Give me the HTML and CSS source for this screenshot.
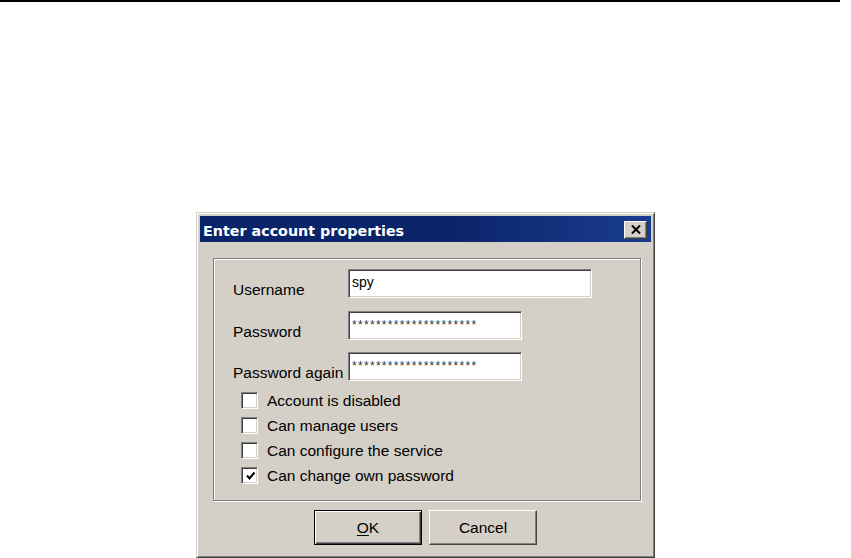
FILE: index.html
```html
<!DOCTYPE html>
<html>
<head>
<meta charset="utf-8">
<link rel="stylesheet" href="styles.css">
</head>
<body>
<div class="topline"></div>
<div class="dialog">
  <div class="titlebar">
    <span class="title">Enter account properties</span>
    <div class="close">
      <svg width="10" height="9" viewBox="0 0 10 9"><path d="M1 0.5 L9 8.5 M9 0.5 L1 8.5" stroke="#000" stroke-width="2"/></svg>
    </div>
  </div>
  <div class="group">
    <div class="field-row">
      <span class="label">Username</span>
      <div class="input wide user">spy</div>
    </div>
    <div class="field-row r2">
      <span class="label">Password</span>
      <div class="input narrow pw">*********************</div>
    </div>
    <div class="field-row r3">
      <span class="label">Password again</span>
      <div class="input narrow pw">*********************</div>
    </div>
    <div class="checks">
      <div class="check-row"><span class="cb"></span><span class="cl">Account is disabled</span></div>
      <div class="check-row"><span class="cb"></span><span class="cl">Can manage users</span></div>
      <div class="check-row"><span class="cb"></span><span class="cl">Can configure the service</span></div>
      <div class="check-row"><span class="cb"><svg width="11" height="11" viewBox="0 0 11 11"><path d="M2 4.5 L4.5 7.5 L9.5 1.5" stroke="#000" stroke-width="2" fill="none"/></svg></span><span class="cl">Can change own password</span></div>
    </div>
  </div>
  <div class="buttons">
    <div class="btn default"><span class="btn-inner"><span class="ul">O</span>K</span></div>
    <div class="btn"><span class="btn-inner">Cancel</span></div>
  </div>
</div>
</body>
</html>
```

FILE: styles.css
```css
html, body {
  margin: 0;
  padding: 0;
  background: #fff;
  overflow: hidden;
  height: 558px;
}
body {
  font-family: "Liberation Sans", Arial, sans-serif;
  font-size: 15.5px;
  color: #000;
}
.topline {
  width: 840px;
  height: 2px;
  background: #000;
}
.dialog {
  box-sizing: border-box;
  margin-top: 210px;
  margin-left: 196px;
  width: 459px;
  height: 346px;
  background: #d4d0c8;
  border: 1px solid;
  border-color: #d4d0c8 #404040 #404040 #d4d0c8;
  box-shadow: inset 1px 1px 0 #fff, inset -1px -1px 0 #808080;
  padding: 3px;
  display: flex;
  flex-direction: column;
}
.titlebar {
  height: 26px;
  background: linear-gradient(90deg, #0a246a 0%, #0a246a 55%, #1a3b8e 100%);
  display: flex;
  align-items: flex-start;
  justify-content: space-between;
  padding-left: 3px;
  padding-right: 4px;
}
.title {
  font-family: "DejaVu Sans", Tahoma, sans-serif;
  font-weight: bold;
  font-size: 14.3px;
  color: #fff;
  line-height: 26px;
  padding-top: 2px;
}
.close {
  box-sizing: border-box;
  margin-top: 5px;
  width: 23px;
  height: 18px;
  background: #d4d0c8;
  border: 1px solid;
  border-color: #fff #404040 #404040 #fff;
  box-shadow: inset -1px -1px 0 #808080;
  display: flex;
  align-items: center;
  justify-content: center;
  padding-bottom: 1px;
}
.group {
  box-sizing: border-box;
  margin-top: 16px;
  margin-left: 13px;
  width: 428px;
  height: 243px;
  border: 1px solid #808080;
  box-shadow: 1px 1px 0 #fff, inset 1px 1px 0 #fff;
  padding: 10px 0 0 19px;
}
.field-row {
  display: flex;
  align-items: flex-end;
  height: 29px;
}
.field-row.r2 { margin-top: 13px; }
.field-row.r3 { margin-top: 12px; }
.label {
  width: 115px;
  line-height: 16px;
  padding-bottom: 0;
}
.input {
  box-sizing: border-box;
  height: 29px;
  background: #fff;
  border: 1px solid;
  border-color: #808080 #fff #fff #808080;
  box-shadow: inset 1px 1px 0 #404040, inset -1px -1px 0 #d4d0c8;
  padding: 3px 0 0 3px;
  line-height: 16px;
  overflow: hidden;
  white-space: nowrap;
}
.input.wide { width: 244px; }
.input.narrow { width: 174px; }
.input.user {
  font-size: 14px;
  padding-top: 4px;
}
.input.pw {
  font-size: 12px;
  letter-spacing: 1.3px;
  padding-top: 5px;
  color: #333;
}
.checks {
  margin-top: 11px;
  margin-left: 8px;
  display: flex;
  flex-direction: column;
  gap: 8px;
}
.check-row {
  display: flex;
  align-items: center;
  height: 17px;
  gap: 9px;
}
.cb {
  box-sizing: border-box;
  width: 17px;
  height: 17px;
  background: #fff;
  border: 1px solid;
  border-color: #808080 #fff #fff #808080;
  box-shadow: inset 1px 1px 0 #404040, inset -1px -1px 0 #d4d0c8;
  display: flex;
  align-items: center;
  justify-content: center;
  padding: 1px 0 0 1px;
}
.cl {
  line-height: 17px;
}
.buttons {
  display: flex;
  justify-content: center;
  gap: 7px;
  margin-top: 9px;
}
.btn {
  box-sizing: border-box;
  width: 108px;
  height: 35px;
  background: #d4d0c8;
  border: 1px solid;
  border-color: #fff #404040 #404040 #fff;
  box-shadow: inset -1px -1px 0 #808080;
  display: flex;
  align-items: center;
  justify-content: center;
}
.btn.default {
  border: 1px solid #000;
  box-shadow: inset 1px 1px 0 #fff, inset -1px -1px 0 #404040, inset -2px -2px 0 #808080;
}
.btn-inner {
  line-height: 17px;
  padding-bottom: 1px;
}
.ul {
  text-decoration: underline;
  text-underline-offset: 2px;
}
```
